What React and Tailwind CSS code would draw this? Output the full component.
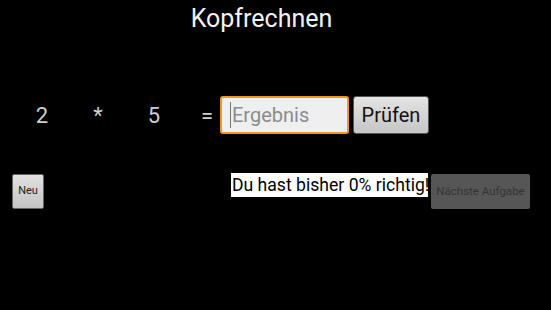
export default function App() {
  return (
    <div className="w-[551px] h-[310px] bg-black text-white font-['Roboto',sans-serif] overflow-hidden flex flex-col">
      {/* Title */}
      <h1 className="mt-[4px] pr-[28px] text-center text-[25px] leading-[29px] text-[#f2f2f2]">Kopfrechnen</h1>

      {/* Task row */}
      <div className="mt-[63px] flex items-center h-[38px] pl-[14px]">
        <span className="w-[56px] text-center text-[22px] text-[#cfcfcf]">2</span>
        <span className="w-[56px] text-center text-[22px] text-[#cfcfcf]">*</span>
        <span className="w-[56px] text-center text-[22px] text-[#cfcfcf]">5</span>
        <span className="w-[38px] text-right pr-[7px] text-[22px] text-[#cfcfcf]">=</span>
        <div className="w-[129px] h-[38px] rounded-[3px] border-2 border-[#f7931e] bg-[#efefef] flex items-center pl-[8px]">
          <span className="w-[1px] h-[26px] bg-[#777]"></span>
          <span className="ml-[1px] text-[20px] text-[#8c8c8c]">Ergebnis</span>
        </div>
        <button className="ml-[4px] w-[76px] h-[38px] rounded-[3px] border border-[#555] bg-gradient-to-b from-[#e4e4e4] to-[#c6c6c6] text-[20px] text-[#111]">
          Prüfen
        </button>
      </div>

      {/* Bottom row */}
      <div className="mt-[39px] flex items-start">
        <button className="ml-[12px] mt-[1px] w-[32px] h-[35px] rounded-[2px] border border-[#666] bg-gradient-to-b from-[#e2e2e2] to-[#c4c4c4] text-[11px] text-[#222]">
          Neu
        </button>
        <div className="ml-[187px] h-[24px] w-[197px] bg-white text-black text-[17.6px] leading-[24px] whitespace-nowrap pl-[1px] overflow-hidden">
          Du hast bisher 0% richtig!
        </div>
        <button className="ml-[3px] mt-[1px] w-[99px] h-[35px] rounded-[2px] bg-[#565656] text-[11.5px] text-[#353535]">
          Nächste Aufgabe
        </button>
      </div>
    </div>
  );
}
